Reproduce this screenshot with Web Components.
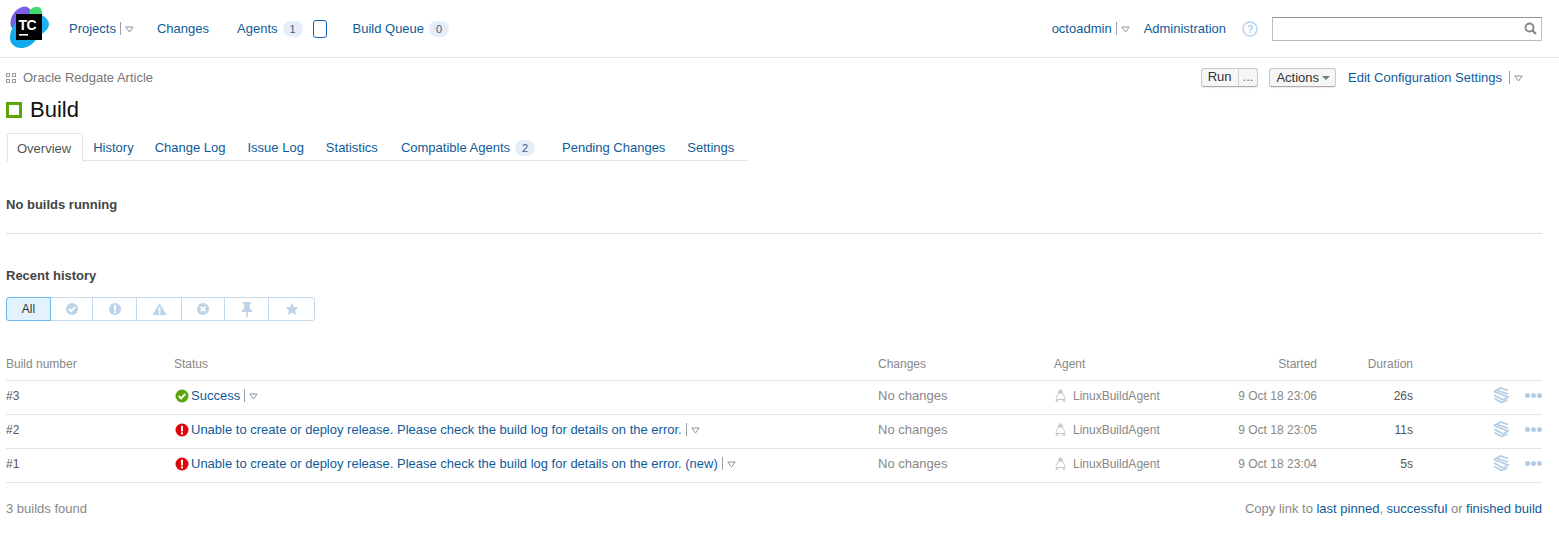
<!DOCTYPE html>
<html>
<head>
<meta charset="utf-8">
<title>Build</title>
<style>
  html, body { margin: 0; padding: 0; background: #fff; }
  body { font: 13px "Liberation Sans", Arial, sans-serif; color: #333; }
</style>
</head>
<body>
<tc-header></tc-header>
<tc-build-page></tc-build-page>

<script>
const LINK = '#0f5b99';
const arrow = `<svg width="9" height="7" viewBox="0 0 9 7"><path d="M.8 1h7.400L4.500 6z" fill="none" stroke="#8a949c" stroke-width="1"/></svg>`;

// small "| v" thing after links
class TcDrop extends HTMLElement {
    constructor() {
        super();
        this.attachShadow({ mode: 'open' });
        this.shadowRoot.innerHTML = `
            <style>
                :host { display: inline-flex; align-items: center; gap: 4px; margin-left: 4px; }
                i { display: block; width: 1px; height: 13px; background: #9aa0a5; }
                svg { display: block; margin-top: 1px; }
            </style>
            <i></i>${arrow}
        `;
    }
}
customElements.define('tc-drop', TcDrop);

class TcBadge extends HTMLElement {
    constructor() {
        super();
        this.attachShadow({ mode: 'open' });
        this.shadowRoot.innerHTML = `
            <style>
                :host {
                    display: inline-block;
                    min-width: 20px;
                    height: 16px;
                    line-height: 16px;
                    border-radius: 8px;
                    background: #e5edf8;
                    color: #3f5a86;
                    font-size: 11px;
                    text-align: center;
                }
            </style>
            <slot></slot>
        `;
    }
}
customElements.define('tc-badge', TcBadge);

class TcHeader extends HTMLElement {
    constructor() {
        super();
        this.attachShadow({ mode: 'open' });
        this.shadowRoot.innerHTML = `
            <style>
                :host {
                    display: flex;
                    align-items: center;
                    height: 57px;
                    border-bottom: 1px solid #e1e3e6;
                    color: ${LINK};
                    font-size: 13px;
                }
                .logo { margin: -2px 0 0 9px; width: 41px; height: 43px; display: block; }
                .item { display: flex; align-items: center; }
                .projects { margin-left: 19px; }
                .changes { margin-left: 23px; }
                .agents { margin-left: 28px; }
                .agents tc-badge { margin-left: 5px; }
                .box { width: 12px; height: 16px; margin-left: 10px; border: 1px solid #0d62b5; border-radius: 3px; }
                .queue { margin-left: 26px; }
                .queue tc-badge { margin-left: 5px; }
                .right { margin-left: auto; display: flex; align-items: center; }
                .admin { margin-left: 14px; }
                .help { display: block; margin-left: 16px; }
                .search {
                    margin: 0 17px 0 14px;
                    width: 264px;
                    height: 22px;
                    border: 1px solid #b8bcbf;
                    border-top-color: #8f9396;
                    display: flex;
                    align-items: center;
                    justify-content: flex-end;
                    padding-right: 4px;
                }
            </style>
            <svg class="logo" viewBox="0 0 41 43">
                <defs>
                    <linearGradient id="b" x1="0" y1="1" x2="1" y2="0">
                        <stop offset="0" stop-color="#0ea5e9"/><stop offset="1" stop-color="#22b5f0"/>
                    </linearGradient>
                </defs>
                <path d="M13 1c5-2 9 2 10 6l-9 22-12-8C0 14 4 4 13 1z" fill="#7a5de8"/>
                <path d="M21 4c4-4 9-4 11-1 2 3 1 8-3 10l-9-2z" fill="#3ddc6e"/>
                <path d="M10 14 30 8c5 1 10 6 10 10 0 4-3 7-7 10-6 5-10 13-19 14C6 43 0 37 1 30c1-7 4-13 9-16z" fill="url(#b)"/>
                <rect x="7" y="8" width="26" height="26" fill="#000"/>
                <text x="9.500" y="23.500" font-family="Liberation Sans, sans-serif" font-weight="700" font-size="14" letter-spacing="-.5" fill="#fff">TC</text>
                <rect x="10" y="28" width="9" height="1.600" fill="#fff"/>
            </svg>
            <span class="item projects">Projects<tc-drop></tc-drop></span>
            <span class="item changes">Changes</span>
            <span class="item agents">Agents<tc-badge>1</tc-badge><span class="box"></span></span>
            <span class="item queue">Build Queue<tc-badge>0</tc-badge></span>
            <div class="right">
                <span class="item">octoadmin<tc-drop></tc-drop></span>
                <span class="item admin">Administration</span>
                <svg class="help" width="16" height="16" viewBox="0 0 16 16">
                    <circle cx="8" cy="8" r="7" fill="none" stroke="#b5d0ea" stroke-width="1.400"/>
                    <text x="8" y="12" text-anchor="middle" font-family="Liberation Sans, sans-serif" font-size="11" font-weight="700" fill="#b5d0ea">?</text>
                </svg>
                <div class="search">
                    <svg width="13" height="13" viewBox="0 0 13 13">
                        <circle cx="5.500" cy="5.500" r="4" fill="none" stroke="#808689" stroke-width="1.800"/>
                        <path d="M8.500 8.500 12 12" stroke="#808689" stroke-width="2.200"/>
                    </svg>
                </div>
            </div>
        `;
    }
}
customElements.define('tc-header', TcHeader);

class TcTabs extends HTMLElement {
    constructor() {
        super();
        this.attachShadow({ mode: 'open' });
        this.shadowRoot.innerHTML = `
            <style>
                :host {
                    display: flex;
                    width: 741px;
                    height: 27px;
                    margin-left: 1px;
                    border-bottom: 1px solid #e1e3e6;
                    color: ${LINK};
                    line-height: 30px;
                }
                span { display: block; padding: 0 11px; white-space: nowrap; }
                .on {
                    height: 27px;
                    padding: 0 11px 1px 9px;
                    color: #555;
                    background: #fff;
                    border: 1px solid #e1e3e6;
                    border-bottom: 0;
                    border-radius: 3px 3px 0 0;
                }
                .first { padding: 0 10px; }
                tc-badge { margin-left: 5px; }
                .wide { padding-right: 16px; }
                .stats { padding-right: 12px; }
            </style>
            <span class="on">Overview</span>
            <span class="first">History</span>
            <span>Change Log</span>
            <span>Issue Log</span>
            <span class="stats">Statistics</span>
            <span class="wide">Compatible Agents<tc-badge>2</tc-badge></span>
            <span>Pending Changes</span>
            <span>Settings</span>
        `;
    }
}
customElements.define('tc-tabs', TcTabs);

class TcFilter extends HTMLElement {
    constructor() {
        super();
        this.attachShadow({ mode: 'open' });
        const c = '#bcd3e8';
        const icons = [
            `<svg width="14" height="14" viewBox="0 0 14 14"><circle cx="7" cy="7" r="6" fill="${c}"/><path d="M4 7l2.200 2.200L10 5" fill="none" stroke="#fff" stroke-width="1.800"/></svg>`,
            `<svg width="14" height="14" viewBox="0 0 14 14"><circle cx="7" cy="7" r="6" fill="${c}"/><rect x="6" y="3" width="2" height="5.400" fill="#fff"/><rect x="6" y="9.300" width="2" height="2" fill="#fff"/></svg>`,
            `<svg width="15" height="14" viewBox="0 0 15 14"><path d="M7.500 1 14.500 13H.5z" fill="${c}"/><rect x="6.600" y="5" width="1.800" height="4.400" fill="#fff"/><rect x="6.600" y="10" width="1.800" height="1.800" fill="#fff"/></svg>`,
            `<svg width="14" height="14" viewBox="0 0 14 14"><circle cx="7" cy="7" r="6" fill="${c}"/><path d="M4.600 4.600l4.800 4.800M9.400 4.600 4.600 9.400" stroke="#fff" stroke-width="1.800"/></svg>`,
            `<svg width="14" height="15" viewBox="0 0 14 15"><path d="M3 0h8v1.400L9.800 2.400v4L12 8.600V10H2V8.600l2.200-2.200v-4L3 1.400zM6.200 10h1.600v5H6.200z" fill="${c}"/></svg>`,
            `<svg width="14" height="14" viewBox="0 0 14 14"><path d="M7 .8l1.900 4.100 4.500.5-3.300 3 .9 4.500L7 10.600l-4 2.300.9-4.500-3.300-3 4.500-.5z" fill="${c}"/></svg>`
        ];
        const widths = [42, 44, 45, 43, 44, 45];
        this.shadowRoot.innerHTML = `
            <style>
                :host {
                    display: flex;
                    width: 309px;
                    height: 24px;
                    box-sizing: border-box;
                    border: 1px solid #c5d9eb;
                    border-radius: 3px;
                    font-size: 12px;
                }
                div {
                    flex: none;
                    box-sizing: border-box;
                    display: flex;
                    align-items: center;
                    justify-content: center;
                    border-right: 1px solid #c5d9eb;
                }
                div:last-child { border-right: 0; }
                .all {
                    width: 45px;
                    margin: -1px 0 -1px -1px;
                    border: 1px solid #6cb8f0;
                    border-radius: 3px 0 0 3px;
                    background: #e3f2fd;
                    color: #333;
                }
            </style>
            <div class="all">All</div>
            ${icons.map((svg, i) => `<div style="width:${widths[i]}px">${svg}</div>`).join('')}
        `;
    }
}
customElements.define('tc-filter', TcFilter);

class TcBuildRow extends HTMLElement {
    constructor() {
        super();
        this.attachShadow({ mode: 'open' });
        const ok = this.getAttribute('state') === 'ok';
        const icon = ok
            ? `<svg width="14" height="14" viewBox="0 0 14 14"><circle cx="7" cy="7" r="6.500" fill="#5aa50a"/><path d="M3.800 7l2.300 2.300L10.200 5" fill="none" stroke="#fff" stroke-width="1.900"/></svg>`
            : `<svg width="14" height="14" viewBox="0 0 14 14"><circle cx="7" cy="7" r="6.500" fill="#e3000b"/><rect x="6" y="2.800" width="2" height="5.600" fill="#fff"/><rect x="6" y="9.400" width="2" height="2" fill="#fff"/></svg>`;
        this.shadowRoot.innerHTML = `
            <style>
                :host {
                    display: grid;
                    grid-template-columns: 168px 704px 176px 160px 103px 96px 1fr;
                    align-items: center;
                    height: 29px;
                    padding-bottom: 4px;
                    box-sizing: content-box;
                    border-bottom: 1px solid #dfe5eb;
                    color: #555;
                    font-size: 12px;
                }
                .status { display: flex; align-items: center; color: ${LINK}; padding-left: 1px; font-size: 13px; }
                .status svg { margin-right: 2px; }
                .changes { color: #888; font-size: 13px; }
                .agent { color: #888; display: flex; align-items: center; gap: 6px; }
                .num { text-align: right; color: #888; }
                .dur { color: #555; }
                .acts { display: flex; justify-content: flex-end; align-items: center; gap: 15px; }
                .dots { display: flex; gap: 1px; }
                .dots i { width: 5px; height: 5px; border-radius: 50%; background: #b3cde6; }
            </style>
            <span>${this.getAttribute('number')}</span>
            <span class="status">${icon}<span><slot></slot></span><tc-drop></tc-drop></span>
            <span class="changes">No changes</span>
            <span class="agent">
                <svg width="13" height="14" viewBox="0 0 13 14">
                    <path d="M6.500 1C5 1 4.500 2 4.500 3.400c0 1.400-.6 2.100-1.300 3.200C2.400 7.800 2 9.300 2.300 10.500h8.400c.3-1.200-.1-2.700-.9-3.900C9.100 5.500 8.500 4.800 8.500 3.400 8.500 2 8 1 6.500 1z" fill="none" stroke="#c2c6c9"/>
                    <path d="M5.200 1.600h2.600l.4 2.900H4.800z" fill="#bfc3c6"/>
                    <path d="M1 12.800 3 10l1.800 2.800zM12 12.800 10 10l-1.800 2.800z" fill="#c9cdd0"/>
                </svg>
                LinuxBuildAgent
            </span>
            <span class="num">${this.getAttribute('started')}</span>
            <span class="num dur">${this.getAttribute('duration')}</span>
            <span class="acts">
                <svg width="17" height="17" viewBox="0 0 17 17"><g fill="none" stroke="#b3cde6" stroke-width="1.700"><path d="M1 4.500 7.500 1 15 3.500"/><path d="M1 4.500 15 10l-5 3"/><path d="M4 3.500 15 7"/><path d="M1 8l9 5M1.500 11.500l7 4 6-2.500"/></g></svg>
                <span class="dots"><i></i><i></i><i></i></span>
            </span>
        `;
    }
}
customElements.define('tc-build-row', TcBuildRow);

class TcBuildPage extends HTMLElement {
    constructor() {
        super();
        this.attachShadow({ mode: 'open' });
        this.shadowRoot.innerHTML = `
            <style>
                :host { display: block; padding: 0 17px 0 6px; }
                a { color: ${LINK}; text-decoration: none; }
                .crumbs { display: flex; align-items: center; height: 39px; color: #777; }
                .crumbs svg { margin-right: 6px; }
                .top-actions { margin-left: auto; display: flex; align-items: center; }
                .btn {
                    display: flex;
                    height: 17px;
                    line-height: 16px;
                    border: 1px solid #c9c9c9;
                    border-bottom-color: #aaa;
                    border-radius: 3px;
                    background: #f6f6f6;
                    color: #333;
                    font-size: 13px;
                    box-shadow: 0 1px 1px rgba(0,0,0,.08);
                }
                .btn span { padding: 0 6px; }
                .btn .more { padding: 0 4px; border-left: 1px solid #d0d0d0; color: #666; }
                .actions { margin-left: 11px; padding: 0 5px 0 6px; align-items: center; gap: 3px; }
                .tri { width: 0; height: 0; border: 4px solid transparent; border-top: 4px solid #777; border-bottom: 0; }
                .edit { margin-left: 12px; }
                .top-actions tc-drop { margin: 0 19px 0 7px; }
                h1 {
                    display: flex;
                    align-items: center;
                    height: 26px;
                    margin: 0 0 10px;
                    font-size: 22px;
                    font-weight: 400;
                    color: #111;
                }
                h1 i { display: block; width: 10px; height: 10px; border: 3px solid #5aa50a; margin-right: 8px; }
                .section { font-weight: 700; color: #444; font-size: 13px; }
                .running { margin-top: 36px; line-height: 15px; padding-bottom: 21px; border-bottom: 1px solid #dfe2e5; }
                .recent { margin: 34px 0 14px; line-height: 15px; }
                .head {
                    display: grid;
                    grid-template-columns: 168px 704px 176px 160px 103px 96px 1fr;
                    align-items: center;
                    height: 60px;
                    box-sizing: border-box;
                    border-bottom: 1px solid #dfe5eb;
                    color: #888;
                    font-size: 12px;
                    padding-top: 27px;
                }
                .head .r { text-align: right; }
                .foot {
                    display: flex;
                    justify-content: space-between;
                    align-items: center;
                    height: 51px;
                    color: #888;
                    font-size: 13px;
                }
            </style>
            <div class="crumbs">
                <svg width="11" height="10" viewBox="0 0 11 10"><g fill="none" stroke="#9b9b9b"><rect x=".5" y=".5" width="3" height="3"/><rect x="6.500" y=".5" width="3" height="3"/><rect x=".5" y="6.500" width="3" height="3"/><rect x="6.500" y="6.500" width="3" height="3"/></g></svg>
                Oracle Redgate Article
                <div class="top-actions">
                    <div class="btn"><span>Run</span><span class="more">...</span></div>
                    <div class="btn actions">Actions<i class="tri"></i></div>
                    <a class="edit">Edit Configuration Settings</a>
                    <tc-drop></tc-drop>
                </div>
            </div>
            <h1><i></i>Build</h1>
            <tc-tabs></tc-tabs>
            <div class="section running">No builds running</div>
            <div class="section recent">Recent history</div>
            <tc-filter></tc-filter>
            <div class="head">
                <span>Build number</span><span>Status</span><span>Changes</span><span>Agent</span>
                <span class="r">Started</span><span class="r">Duration</span><span></span>
            </div>
            <tc-build-row number="#3" state="ok" started="9 Oct 18 23:06" duration="26s">Success</tc-build-row>
            <tc-build-row number="#2" state="error" started="9 Oct 18 23:05" duration="11s">Unable to create or deploy release. Please check the build log for details on the error.</tc-build-row>
            <tc-build-row number="#1" state="error" started="9 Oct 18 23:04" duration="5s">Unable to create or deploy release. Please check the build log for details on the error. (new)</tc-build-row>
            <div class="foot">
                <span>3 builds found</span>
                <span>Copy link to <a>last pinned</a>, <a>successful</a> or <a>finished build</a></span>
            </div>
        `;
    }
}
customElements.define('tc-build-page', TcBuildPage);
</script>
</body>
</html>
